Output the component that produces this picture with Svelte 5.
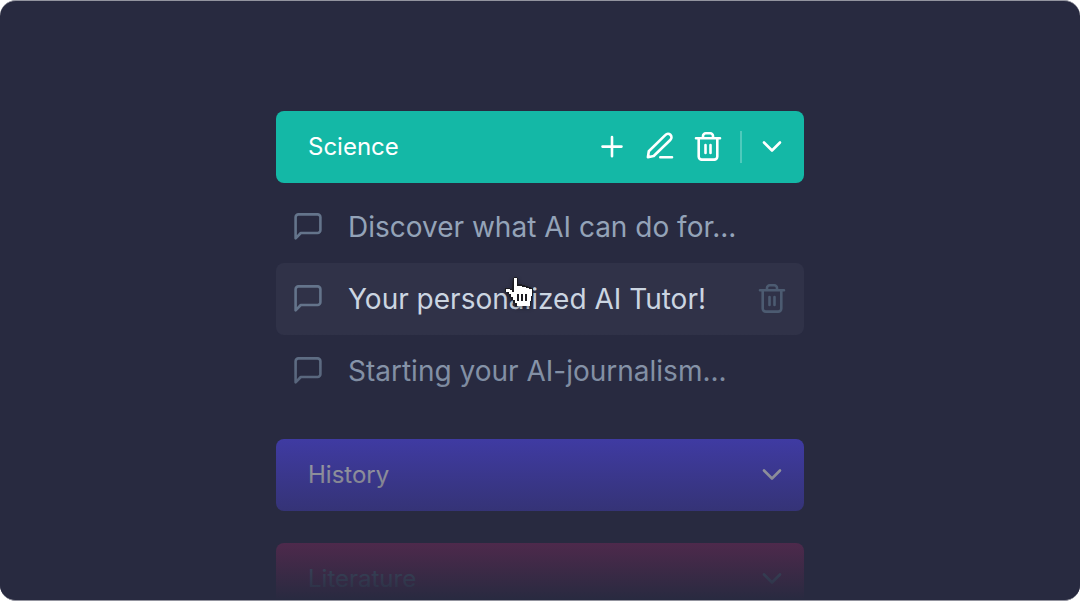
<script>
  const chats = [
    { title: 'Discover what AI can do for...', active: false },
    { title: 'Your personalized AI Tutor!', active: true },
    { title: 'Starting your AI-journalism...', active: false },
  ];
  const folders = [
    { name: 'Science', tone: 'teal', open: true },
    { name: 'History', tone: 'indigo', open: false },
    { name: 'Literature', tone: 'pink', open: false },
  ];
</script>

{#snippet trash()}
  <svg viewBox="0 0 32 32" aria-hidden="true">
    <path d="M4 7.300H28M6.700 7.300V25.600a3 3 0 0 0 3 3H22.300a3 3 0 0 0 3-3V7.300M11 7V5a2.700 2.700 0 0 1 2.700-2.700H18.300a2.700 2.700 0 0 1 2.700 2.700V7M13.500 14V22M18.500 14V22" />
  </svg>
{/snippet}

{#snippet chevron()}
  <svg viewBox="0 0 32 32" aria-hidden="true"><path d="M8 11.500L16 19.500L24 11.500" /></svg>
{/snippet}

<main>
  <nav aria-label="Folders">
    {#each folders as folder}
      <section>
        <header class={folder.tone}>
          <h2>{folder.name}</h2>
          {#if folder.open}
            <button aria-label="New chat">
              <svg viewBox="0 0 32 32" aria-hidden="true"><path d="M16 6V25.300M6.500 15.600H25.500" /></svg>
            </button>
            <button aria-label="Rename folder">
              <svg viewBox="0 0 32 32" aria-hidden="true">
                <path d="M3.900 26.300L4.800 20.300L21.500 3.900a3.400 3.400 0 0 1 5 4.800L9.700 25ZM16.300 26.200H28" />
              </svg>
            </button>
            <button aria-label="Delete folder">{@render trash()}</button>
            <span class="divider"></span>
          {/if}
          <button aria-label="Toggle {folder.name}" aria-expanded={folder.open}>{@render chevron()}</button>
        </header>
        {#if folder.open}
          <ul>
            {#each chats as chat}
              <li class:active={chat.active}>
                <svg viewBox="0 0 32 32" aria-hidden="true">
                  <path d="M3.600 27.300V6.200a2.800 2.800 0 0 1 2.800-2.800H25.600a2.800 2.800 0 0 1 2.800 2.800V19.200a2.800 2.800 0 0 1-2.800 2.800H8.800Z" />
                </svg>
                <a href="#chat">{chat.title}</a>
                {#if chat.active}
                  <button aria-label="Delete chat">{@render trash()}</button>
                  <svg class="pointer" viewBox="0 0 28 34" aria-hidden="true">
                    <path class="ink" d="M8 1h1V0h3v1h1v6h4v1h3v1h3v1h3v1h2v8h-1v5h-1v5H10v-3H8v-3H6v-3H4v-3H2v-2H0v-4h5v1h2z" />
                    <path class="hand" d="M9 1h3v8h5v1h4v1h3v1h3v7h-1v5h-1v5H12v-3h-2v-3H8v-3H6v-3H4v-2H1v-3h4v1h2v2h2z" />
                    <path class="ink" d="M12 17h2v7h-2zM16 17h2v7h-2zM20 17h2v7h-2z" />
                  </svg>
                {/if}
              </li>
            {/each}
          </ul>
        {/if}
      </section>
    {/each}
  </nav>
</main>

<style>
  :global(body) {
    background: #fff;
  }
  main {
    position: relative;
    box-sizing: border-box;
    min-height: 100vh;
    max-height: 100vh;
    padding: 110px 24px 0;
    overflow: hidden;
    border: solid #93949f;
    border-width: 1px 0;
    border-radius: 16px;
    background: #282a40;
    font-family: Inter, sans-serif;
    font-optical-sizing: none;
  }
  main::after {
    content: '';
    position: absolute;
    inset: 55% 0 0;
    background: linear-gradient(#282a4000, #282a40);
    pointer-events: none;
  }
  nav {
    display: flex;
    flex-direction: column;
    gap: 32px;
    max-width: 528px;
    margin: 0 auto;
  }
  header {
    display: flex;
    align-items: center;
    gap: 16px;
    box-sizing: border-box;
    height: 72px;
    padding: 0 16px 0 32px;
    border-radius: 8px;
    color: #fff;
  }
  .teal {
    background: #14b8a6;
  }
  .indigo {
    background: #4f46e5;
  }
  .pink {
    background: #db2777;
    color: #a8f0f8;
  }
  h2 {
    flex: 1;
    margin: 0;
    font-size: 24px;
    font-weight: 400;
    line-height: 32px;
  }
  button {
    display: flex;
    padding: 0;
    border: 0;
    background: none;
    color: inherit;
    cursor: pointer;
  }
  svg {
    flex: none;
    width: 32px;
    height: 32px;
    fill: none;
    stroke: currentColor;
    stroke-width: 2.6;
    stroke-linecap: round;
    stroke-linejoin: round;
  }
  .divider {
    width: 2px;
    height: 32px;
    margin-right: -2px;
    background: #ffffff40;
  }
  ul {
    margin: 0;
    padding: 8px 0 0;
    list-style: none;
  }
  li {
    position: relative;
    display: flex;
    align-items: center;
    gap: 24px;
    box-sizing: border-box;
    height: 72px;
    padding: 0 16px;
    border-radius: 8px;
    color: #64748b;
  }
  .active {
    background: #303248;
    color: #4c5b71;
  }
  .active > svg:first-child {
    color: #64748b;
  }
  a {
    flex: 1;
    color: #94a3b8;
    font-size: 28px;
    font-weight: 400;
    line-height: 40px;
    text-decoration: none;
    white-space: nowrap;
  }
  .active a {
    color: #cbd5e1;
  }
  .pointer {
    position: absolute;
    top: 14px;
    left: 229px;
    width: 28px;
    height: 34px;
    stroke: none;
    filter: drop-shadow(0 2px 2px #00000060);
    pointer-events: none;
  }
  .ink {
    fill: #1b1b20;
  }
  .hand {
    fill: #fff;
  }
</style>
